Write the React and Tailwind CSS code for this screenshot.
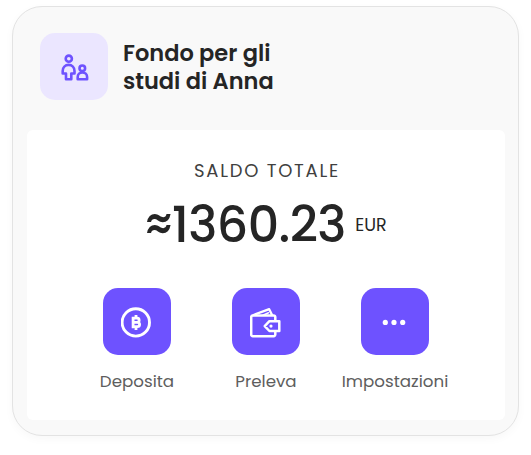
import React from 'react';

const FamilyIcon = () => (
  <svg className="w-[30px] h-[28px]" viewBox="59.2 52.7 30 28" fill="none" stroke="currentColor" strokeWidth="2.6" strokeLinejoin="round" strokeLinecap="round">
    <circle cx="69" cy="58.4" r="3.1" />
    <path d="M66.2 79v-5.8h-3.3v-2.6c0-3.4 2.5-6 5.9-6s5.9 2.6 5.9 6v2.6h-3.2V79z" />
    <circle cx="82.5" cy="68" r="2.8" />
    <path d="M77.9 79v-2.2c0-2.7 2-4.6 4.7-4.6s4.7 1.9 4.7 4.6V79z" />
  </svg>
);

const DepositIcon = () => (
  <svg className="w-8 h-8" viewBox="1 0 32 32" fill="none" stroke="currentColor">
    <circle cx="15.8" cy="16.4" r="13.7" strokeWidth="2.9" />
    <path d="M12.9 12.2h4.2a2 2 0 0 1 0 4.1h-4.2m0 0h4.5a2.2 2.2 0 0 1 0 4.4h-4.5M13.1 10.8v11.4" strokeWidth="2.8" />
    <path d="M16 9v3.4M16 20.4V24" strokeWidth="2.8" />
  </svg>
);

const WalletIcon = () => (
  <svg className="w-8 h-8" viewBox="1 0 32 32" fill="none" stroke="currentColor" strokeWidth="2.5" strokeLinejoin="round" strokeLinecap="round">
    <path d="M26.3 14.5v-3.4a1.6 1.6 0 0 0-1.6-1.6H3.8a1.6 1.6 0 0 0-1.6 1.6v17.5a1.6 1.6 0 0 0 1.6 1.6h20.9a1.6 1.6 0 0 0 1.6-1.6v-3.2" />
    <path d="M4.5 9 20.2 3.2l2.6 5.4" strokeWidth="2.3" />
    <path d="M14 9.2l5.5-2.4" strokeWidth="1.5" />
    <path d="M30.3 15.2h-9.9l-4.7 4.9 4.7 4.9h9.9z" />
    <circle cx="22" cy="20.1" r="1.6" fill="currentColor" stroke="none" />
  </svg>
);

const DotsIcon = () => (
  <svg className="w-8 h-8" viewBox="0.5 0 32 32" fill="currentColor">
    <circle cx="6.8" cy="16.4" r="2.6" />
    <circle cx="15.5" cy="16.4" r="2.6" />
    <circle cx="24.2" cy="16.4" r="2.6" />
  </svg>
);

const actions = [
  { label: 'Deposita', icon: <DepositIcon /> },
  { label: 'Preleva', icon: <WalletIcon /> },
  { label: 'Impostazioni', icon: <DotsIcon /> },
];

const App = () => {
  return (
    <div className="h-[455px] bg-white pl-3 pt-[6px] font-['Poppins','Inter',sans-serif] text-[#252525]">
      <div className="w-[507px] h-[430px] rounded-[30px] border-[1.5px] border-[#e3e3e3] bg-[#f9f9f9] px-[14px] shadow-[0_3px_10px_rgba(0,0,0,0.03)]">
        <div className="flex h-[123px] items-start gap-[15px] pl-[13.4px] pt-[26px]">
          <div className="flex w-[67.6px] h-[67.4px] items-center justify-center rounded-[15px] bg-[#ebe6ff] text-[#6e52ff]">
            <FamilyIcon />
          </div>
          <h1 className="flex flex-col pt-[6px] text-[22.5px] font-semibold leading-[28px] whitespace-nowrap">
            <span>Fondo per gli</span>
            <span>studi di Anna</span>
          </h1>
        </div>

        <div className="flex w-[478px] h-[290px] flex-col items-center rounded-md bg-white">
          <p className="mt-[28px] pl-[2px] text-lg leading-[26px] tracking-[1.75px] text-[#404040] whitespace-nowrap">SALDO TOTALE</p>
          <div className="mt-[11px] flex h-[60px] items-center whitespace-nowrap">
            <span className="text-[49px] font-medium leading-[60px] tracking-[-0.6px]">≈1360.23</span>
            <span className="ml-[9.5px] text-[17.5px] leading-[24px]">EUR</span>
          </div>
          <div className="mt-[33px] flex gap-[61.5px]">
            {actions.map(action => (
              <div key={action.label} className="flex w-[67.5px] flex-col items-center">
                <button className="flex w-[67.5px] h-[67.4px] items-center justify-center rounded-[15px] bg-[#6e52ff] text-white">
                  {action.icon}
                </button>
                <span className="mt-[13.6px] text-[16.7px] leading-6 whitespace-nowrap text-[#5e5e5e]">
                  {action.label}
                </span>
              </div>
            ))}
          </div>
        </div>
      </div>
    </div>
  );
};

export default App;
